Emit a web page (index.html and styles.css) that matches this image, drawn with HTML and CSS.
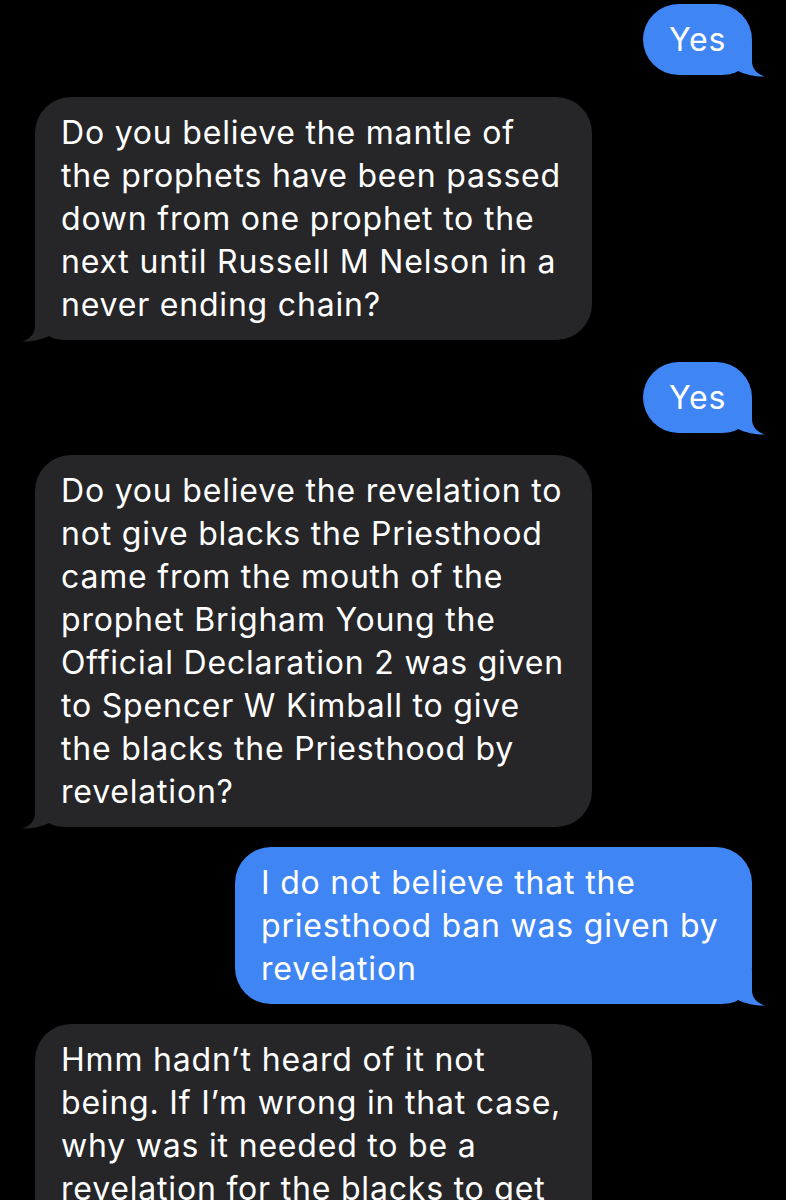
FILE: index.html
```html
<!DOCTYPE html>
<html lang="en">
<head>
<meta charset="utf-8">
<title>Messages</title>
<link rel="stylesheet" href="styles.css">
</head>
<body>
<main class="thread">
  <div class="bubble sent short"><span class="text">Yes</span><svg class="tail tail-right" viewBox="0 0 50 36" width="50" height="36"><path d="M0,0 H37 V20 C37,28 42,33 50,35.5 C43,36 31,34 23,30 C19,33 12,34 4,34 H0 Z"/></svg></div>

  <div class="bubble received"><span class="text">Do you believe the mantle of<br>the prophets have been passed<br>down from one prophet to the<br>next until Russell M Nelson in a<br>never ending chain?</span><svg class="tail tail-left" viewBox="0 0 50 36" width="50" height="36"><path d="M0,0 H37 V20 C37,28 42,33 50,35.5 C43,36 31,34 23,30 C19,33 12,34 4,34 H0 Z"/></svg></div>

  <div class="bubble sent short"><span class="text">Yes</span><svg class="tail tail-right" viewBox="0 0 50 36" width="50" height="36"><path d="M0,0 H37 V20 C37,28 42,33 50,35.5 C43,36 31,34 23,30 C19,33 12,34 4,34 H0 Z"/></svg></div>

  <div class="bubble received"><span class="text">Do you believe the revelation to<br>not give blacks the Priesthood<br>came from the mouth of the<br>prophet Brigham Young the<br>Official Declaration 2 was given<br>to Spencer W Kimball to give<br>the blacks the Priesthood by<br>revelation?</span><svg class="tail tail-left" viewBox="0 0 50 36" width="50" height="36"><path d="M0,0 H37 V20 C37,28 42,33 50,35.5 C43,36 31,34 23,30 C19,33 12,34 4,34 H0 Z"/></svg></div>

  <div class="bubble sent close"><span class="text">I do not believe that the<br>priesthood ban was given by<br>revelation</span><svg class="tail tail-right" viewBox="0 0 50 36" width="50" height="36"><path d="M0,0 H37 V20 C37,28 42,33 50,35.5 C43,36 31,34 23,30 C19,33 12,34 4,34 H0 Z"/></svg></div>

  <div class="bubble received close"><span class="text">Hmm hadn’t heard of it not<br>being. If I’m wrong in that case,<br>why was it needed to be a<br>revelation for the blacks to get<br>the Priesthood?</span><svg class="tail tail-left" viewBox="0 0 50 36" width="50" height="36"><path d="M0,0 H37 V20 C37,28 42,33 50,35.5 C43,36 31,34 23,30 C19,33 12,34 4,34 H0 Z"/></svg></div>
</main>
</body>
</html>
```

FILE: styles.css
```css
html, body {
  margin: 0;
  padding: 0;
  background: #000;
}

.thread {
  display: flex;
  flex-direction: column;
  gap: 22px;
  padding: 4px 34px 40px 35px;
  font-family: "Inter", "Noto Sans", sans-serif;
  font-size: 32px;
  line-height: 43px;
  letter-spacing: 0.8px;
  color: #fff;
}

.bubble {
  position: relative;
  box-sizing: border-box;
  padding: 14px 26px;
  border-radius: 36px;
  white-space: nowrap;
}

.close {
  margin-top: -2px;
}

.text {
  position: relative;
  z-index: 1;
}

.sent {
  align-self: flex-end;
  background: #3f86f4;
  fill: #3f86f4;
  width: 517px;
}

.sent.short {
  width: 109px;
}

.received {
  align-self: flex-start;
  background: #262629;
  fill: #262629;
  width: 557px;
}

.tail {
  position: absolute;
  bottom: -2px;
  display: block;
}

.tail-right {
  right: -13px;
}

.tail-left {
  left: -13px;
  transform: scaleX(-1);
}
```
